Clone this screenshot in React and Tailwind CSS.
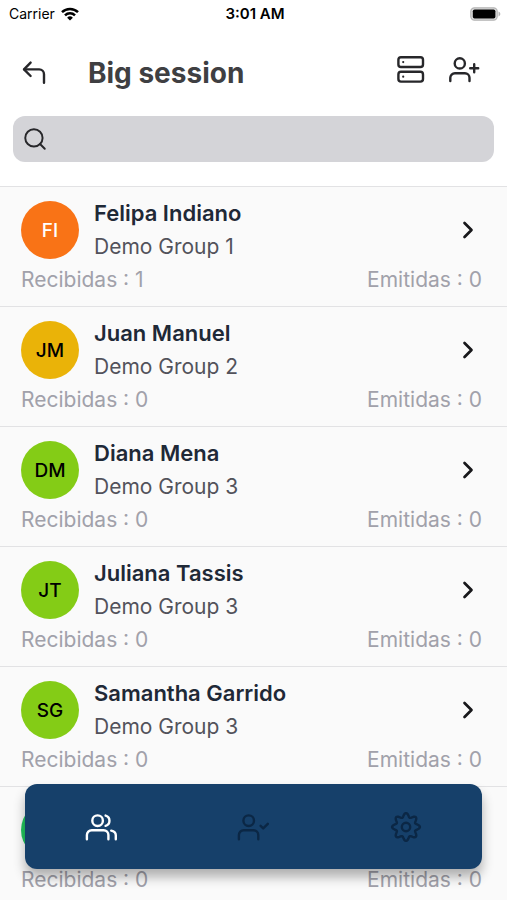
import { FiChevronRight, FiSearch } from "react-icons/fi";

const people = [
  { id: 1, initials: "FI", name: "Felipa Indiano", group: "Demo Group 1", received: 1, sent: 0, avatar: "bg-[#f97316] text-white" },
  { id: 2, initials: "JM", name: "Juan Manuel", group: "Demo Group 2", received: 0, sent: 0, avatar: "bg-[#eab308] text-black" },
  { id: 3, initials: "DM", name: "Diana Mena", group: "Demo Group 3", received: 0, sent: 0, avatar: "bg-[#84cc16] text-black" },
  { id: 4, initials: "JT", name: "Juliana Tassis", group: "Demo Group 3", received: 0, sent: 0, avatar: "bg-[#84cc16] text-black" },
  { id: 5, initials: "SG", name: "Samantha Garrido", group: "Demo Group 3", received: 0, sent: 0, avatar: "bg-[#84cc16] text-black" },
  { id: 6, initials: "", name: "", group: "", received: 0, sent: 0, avatar: "bg-[#22c55e] text-black" },
];

const LineIcon = ({ children }) => (
  <svg
    viewBox="0 0 32 32"
    className="size-8"
    fill="none"
    stroke="currentColor"
    strokeWidth="2.4"
    strokeLinecap="round"
    strokeLinejoin="round"
    aria-hidden="true"
  >
    {children}
  </svg>
);

const BackIcon = () => (
  <LineIcon>
    <path d="M12.6 5.6 6 12.4l6.6 6.6" />
    <path d="M6.5 12.4h14.7a4.8 4.8 0 0 1 4.8 4.8v8.6" />
  </LineIcon>
);

const ServerIcon = () => (
  <LineIcon>
    <rect x="3.4" y="3.2" width="24.6" height="9.8" rx="2.6" />
    <rect x="3.4" y="17.8" width="24.6" height="9.8" rx="2.6" />
    <path d="M8.2 8.1h.01M8.2 22.7h.01" strokeWidth="2.2" />
  </LineIcon>
);

const UserPlusIcon = () => (
  <LineIcon>
    <circle cx="11.8" cy="9.4" r="5.1" />
    <path d="M2.3 27v-3.2a4.6 4.6 0 0 1 4.6-4.6h10a4.6 4.6 0 0 1 4.6 4.6V27" />
    <path d="M26.2 10.2v8M22.2 14.2h8" />
  </LineIcon>
);

const UsersIcon = () => (
  <LineIcon>
    <circle cx="12.6" cy="9.7" r="5.3" />
    <path d="M1.9 28.2V24a4.8 4.8 0 0 1 4.8-4.8h11.9a4.8 4.8 0 0 1 4.8 4.8v4.2" />
    <path d="M20.6 4.6a5.3 5.3 0 0 1 0 10.2" />
    <path d="M26.2 19.6c2.8.6 4.6 2.2 4.6 4.7v3.9" />
  </LineIcon>
);

const UserCheckIcon = () => (
  <LineIcon>
    <circle cx="11.7" cy="9.7" r="5.3" />
    <path d="M1.9 28.2V24a4.8 4.8 0 0 1 4.8-4.8h9.8a4.8 4.8 0 0 1 4.8 4.8v4.2" />
    <path d="m23.6 14.8 2.6 2.6 4.6-4.6" />
  </LineIcon>
);

// eight rounded teeth around the centre of the 32x32 box
const gearPoints = Array.from({ length: 96 }, (_, i) => {
  const angle = (i / 96) * Math.PI * 2;
  const radius = 11.9 + 2 * Math.cos(angle * 8);
  return `${(16 + radius * Math.cos(angle)).toFixed(2)},${(16 + radius * Math.sin(angle)).toFixed(2)}`;
}).join(" ");

const GearIcon = () => (
  <LineIcon>
    <polygon points={gearPoints} />
    <circle cx="16" cy="16" r="4.2" />
  </LineIcon>
);

const WifiIcon = () => (
  <svg viewBox="0 0 18 14" className="h-[14px] w-[18px]" aria-hidden="true">
    <g fill="none" stroke="black" strokeWidth="2.5">
      <path d="M1 5.2a11.4 11.4 0 0 1 16 0" />
      <path d="M4 8.4a7.1 7.1 0 0 1 10 0" />
    </g>
    <path d="M9 13.6 6.1 10.7a4.1 4.1 0 0 1 5.8 0Z" />
  </svg>
);

const BatteryIcon = () => (
  <svg viewBox="0 0 31 14" className="h-[14px] w-[31px]" aria-hidden="true">
    <rect x="0.8" y="0.8" width="26.4" height="12.4" rx="3.6" fill="#dcdcdc" stroke="#b4b4b4" strokeWidth="1.2" />
    <rect x="2.8" y="2.4" width="22.6" height="9.2" rx="1.8" />
    <path d="M28.5 4.6c2.4.8 2.4 4 0 4.8Z" fill="#b4b4b4" />
  </svg>
);

const StatusBar = () => (
  <div className="grid h-7 grid-cols-3 items-center pr-[6px] pl-[9px] text-black">
    <div className="flex items-center gap-[6px] text-sm">
      Carrier
      <WifiIcon />
    </div>
    <p className="text-center text-[15px] font-semibold">3:01 AM</p>
    <div className="flex justify-end">
      <BatteryIcon />
    </div>
  </div>
);

const PersonRow = ({ person }) => (
  <li className="border-t border-[#e2e2e4] bg-[#fafafa] pt-[10px] pr-[25px] pb-[10px] pl-[21px]">
    <a href="#" className="block text-[21px] leading-[33px]">
      <div className="flex items-center gap-[15px]">
        <span
          className={`flex size-[58px] shrink-0 items-center justify-center rounded-full text-[19px] font-medium ${person.avatar}`}
        >
          {person.initials}
        </span>
        <div className="h-[66px] min-w-0 flex-1">
          <p className="truncate text-[22px] leading-[33px] font-semibold text-[#1f2937]">{person.name}</p>
          <p className="truncate text-[#52525b]">{person.group}</p>
        </div>
        <FiChevronRight className="size-7 text-[#18181b]" strokeWidth={2.3} />
      </div>
      <div className="flex justify-between text-[#a1a1aa]">
        <span>Recibidas : {person.received}</span>
        <span>Emitidas : {person.sent}</span>
      </div>
    </a>
  </li>
);

const App = () => (
  <div className="flex h-screen flex-col overflow-hidden bg-white font-['Inter','Liberation_Sans',sans-serif]">
    <StatusBar />

    <header className="flex h-[88px] items-center pt-[2px] pr-[27px] pl-[18px] text-[#27272a]">
      <button type="button" aria-label="Volver">
        <BackIcon />
      </button>
      <h1 className="ml-[38px] flex-1 text-[28px] font-bold text-[#3f3f42]">Big session</h1>
      <div className="flex items-center gap-[21px] pb-[6px]">
        <button type="button" aria-label="Sesiones">
          <ServerIcon />
        </button>
        <button type="button" aria-label="Agregar persona">
          <UserPlusIcon />
        </button>
      </div>
    </header>

    <label className="mx-[13px] mb-6 flex h-[46px] shrink-0 items-center gap-2 rounded-xl bg-[#d4d4d8] px-[9px]">
      <FiSearch className="size-[26px] text-[#27272a]" strokeWidth={1.8} />
      <input type="search" aria-label="Buscar" className="min-w-0 flex-1 bg-transparent text-lg outline-none" />
    </label>

    <ul className="min-h-0 flex-1 overflow-hidden">
      {people.map((person) => (
        <PersonRow key={person.id} person={person} />
      ))}
    </ul>

    <nav className="fixed inset-x-[25px] bottom-[31px] grid h-[85px] grid-cols-3 place-items-center rounded-xl bg-[#16406a] text-[#0b2745] shadow-[0_8px_12px_rgba(0,0,0,0.3)]">
      <button type="button" aria-label="Personas" className="text-white">
        <UsersIcon />
      </button>
      <button type="button" aria-label="Asistencia">
        <UserCheckIcon />
      </button>
      <button type="button" aria-label="Ajustes">
        <GearIcon />
      </button>
    </nav>
  </div>
);

export default App;
